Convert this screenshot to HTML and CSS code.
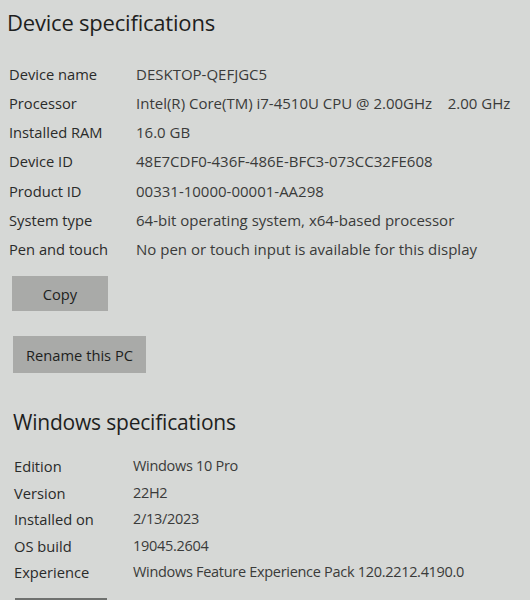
FILE: index.html
```html
<!DOCTYPE html>
<html lang="en">
<head>
  <meta charset="UTF-8" />
  <title>About</title>
  <link rel="stylesheet" href="styles.css">
</head>
<body>

  <!-- Device specifications -->
  <section class="device">
    <h1>Device specifications</h1>
    <div class="specs">
      <div class="label">Device name</div><div class="value">DESKTOP-QEFJGC5</div>
      <div class="label">Processor</div><div class="value">Intel(R) Core(TM) i7-4510U CPU @ 2.00GHz&nbsp;&nbsp;&nbsp;&nbsp;2.00 GHz</div>
      <div class="label">Installed RAM</div><div class="value">16.0 GB</div>
      <div class="label">Device ID</div><div class="value">48E7CDF0-436F-486E-BFC3-073CC32FE608</div>
      <div class="label">Product ID</div><div class="value">00331-10000-00001-AA298</div>
      <div class="label">System type</div><div class="value">64-bit operating system, x64-based processor</div>
      <div class="label">Pen and touch</div><div class="value">No pen or touch input is available for this display</div>
    </div>
    <button class="btn btn-copy">Copy</button>
    <button class="btn btn-rename">Rename this PC</button>
  </section>

  <!-- Windows specifications -->
  <section class="windows">
    <h2>Windows specifications</h2>
    <div class="specs">
      <div class="label">Edition</div><div class="value">Windows 10 Pro</div>
      <div class="label">Version</div><div class="value">22H2</div>
      <div class="label">Installed on</div><div class="value">2/13/2023</div>
      <div class="label">OS build</div><div class="value">19045.2604</div>
      <div class="label">Experience</div><div class="value">Windows Feature Experience Pack 120.2212.4190.0</div>
    </div>
    <!-- copy button, scrolled mostly out of view -->
    <button class="btn btn-next" aria-label="Copy"></button>
  </section>

</body>
</html>
```

FILE: styles.css
```css
/* Settings > About page, light theme */
body {
  font-family: 'Open Sans', 'Noto Sans', sans-serif;
  margin: 0;
  background: #d6d8d6;
  color: #1e1f1e;
  overflow: hidden;
  height: 600px;
}
h1 {
  font-size: 22px;
  font-weight: 400;
  margin: 0;
  padding: 5px 0 0 7px;
  line-height: 34px;
  letter-spacing: -0.2px;
}
h2 {
  font-size: 21px;
  font-weight: 400;
  margin: 0;
  padding-left: 13px;
  line-height: 30px;
  letter-spacing: -0.2px;
}
.specs {
  display: grid;
  grid-template-columns: 127px 1fr;
  font-size: 14.7px;
  color: #2a2b2a;
}
.specs .label,
.specs .value {
  white-space: nowrap;
}
.specs .value {
  color: #3a3b3a;
}
.device .specs {
  margin-top: 25px;
  padding-left: 9px;
  grid-auto-rows: 29.17px;
}
.device .specs .value {
  font-size: 15px;
}
.windows {
  margin-top: 34px;
}
.windows .specs {
  margin-top: 19px;
  padding-left: 14px;
  grid-template-columns: 119px 1fr;
  grid-auto-rows: 26.5px;
}
.windows .specs .value {
  font-size: 14.5px;
  letter-spacing: -0.3px;
}
.btn {
  display: block;
  font-family: inherit;
  font-size: 14.7px;
  color: #1e1f1e;
  background: #a9aaa8;
  border: none;
  padding: 0;
  margin-left: 12px;
}
.btn-copy {
  width: 96px;
  height: 35px;
  margin-top: 8px;
}
.btn-rename {
  width: 133px;
  height: 37px;
  margin-top: 25px;
  margin-left: 13px;
}
.btn-next {
  width: 92px;
  height: 34px;
  margin-top: 9px;
  margin-left: 15px;
  background: #6f716f;
}
```
